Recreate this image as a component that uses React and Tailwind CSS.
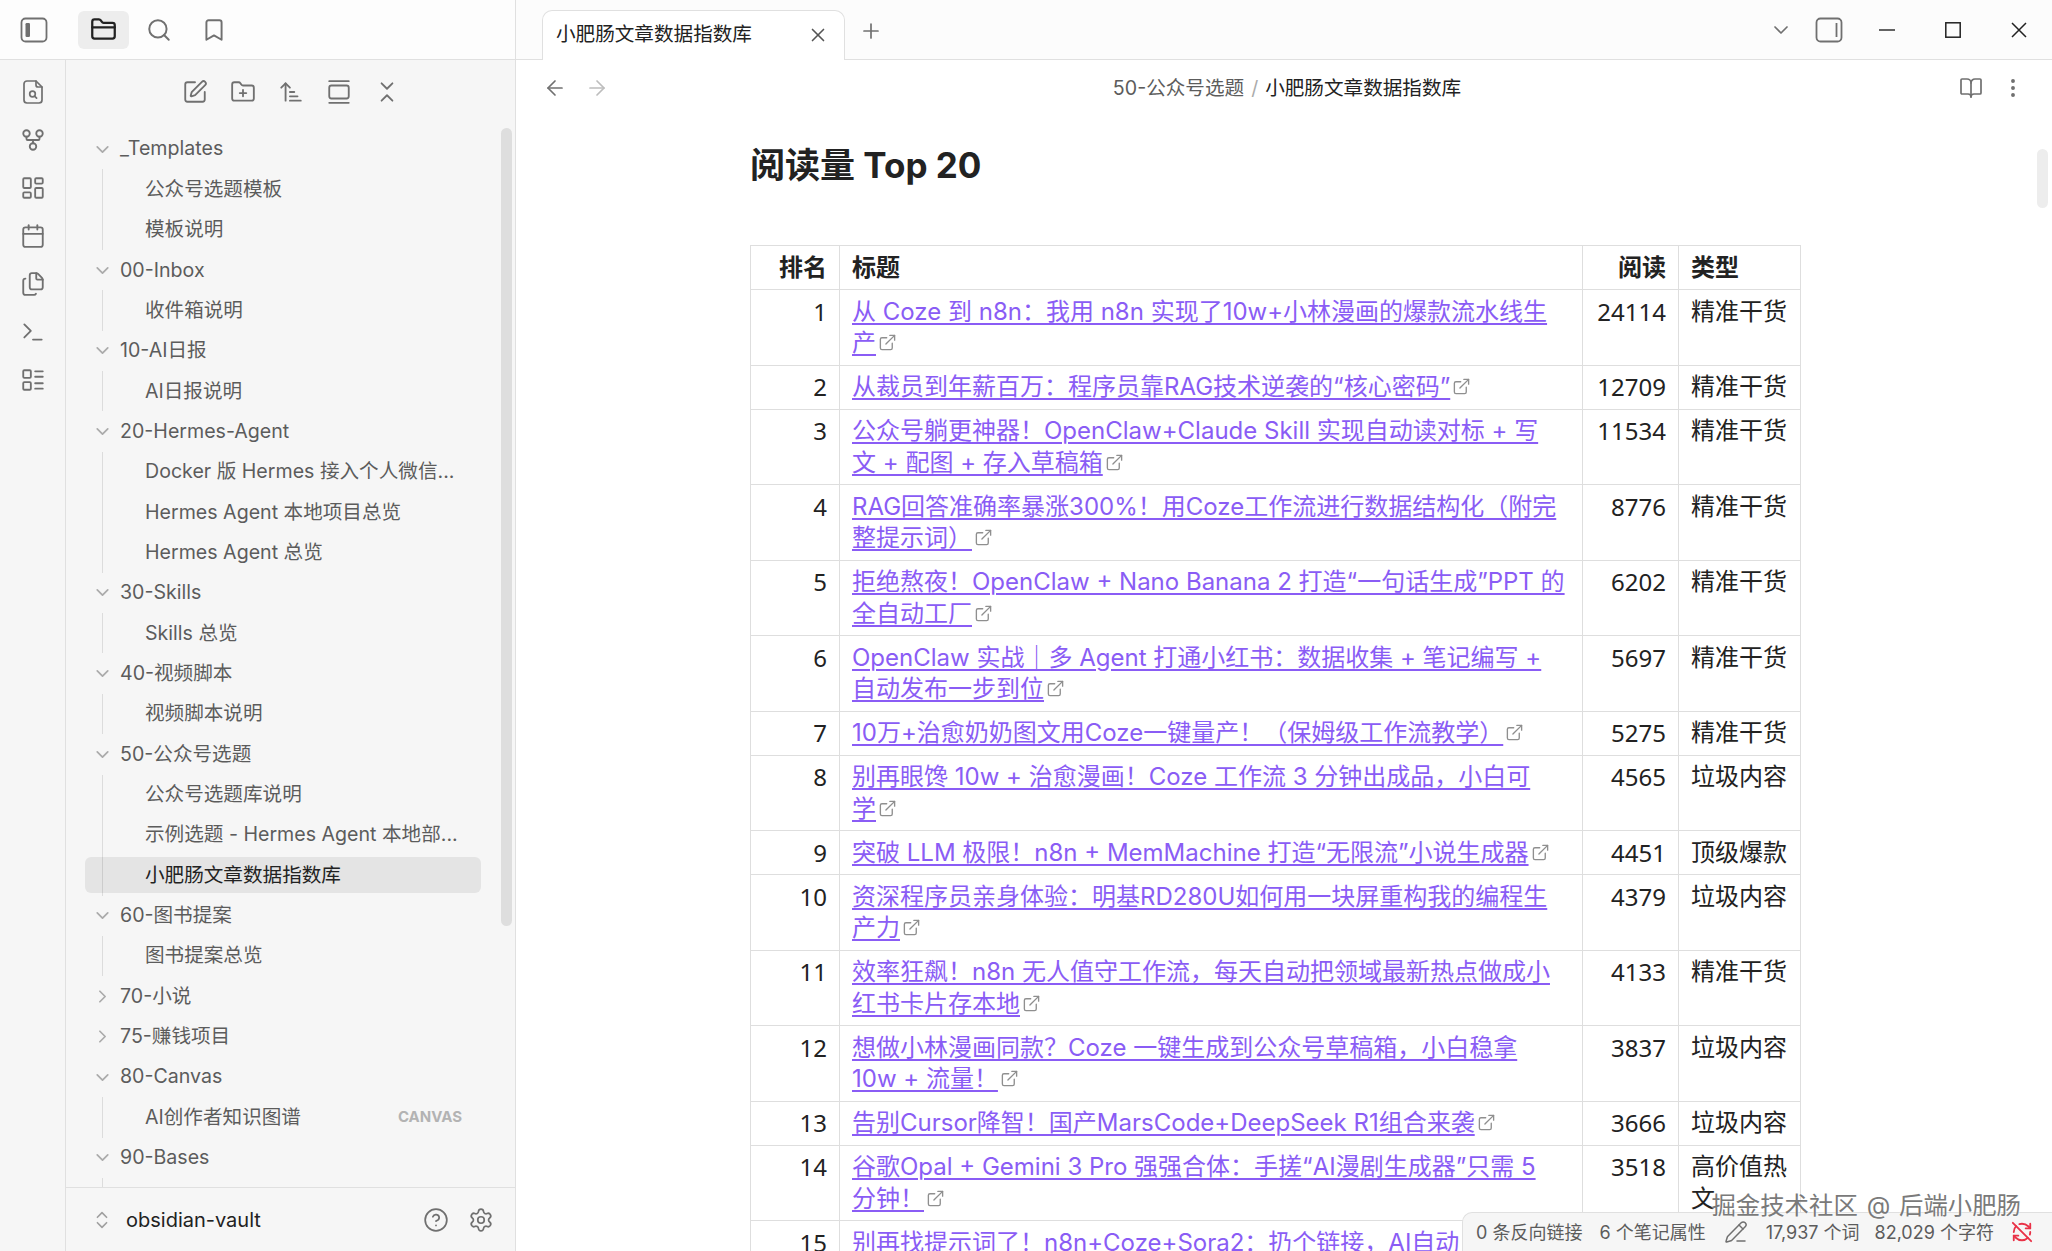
import {
  ArrowLeft, ArrowRight, ArrowUpNarrowWide, BookOpen, Bookmark, Calendar, ChevronDown, ChevronRight,
  ChevronsDownUp, ChevronsUpDown, CircleHelp, ExternalLink, Files, FolderClosed, FolderPlus,
  GalleryVertical, GitFork, LayoutDashboard, LayoutList, MoreVertical, PencilLine, Plus, RefreshCwOff,
  Search, Settings, SquarePen, Terminal, X,
} from 'lucide-react';

const tree = [
  { name: '_Templates', open: true, files: [{ name: '公众号选题模板' }, { name: '模板说明' }] },
  { name: '00-Inbox', open: true, files: [{ name: '收件箱说明' }] },
  { name: '10-AI日报', open: true, files: [{ name: 'AI日报说明' }] },
  {
    name: '20-Hermes-Agent',
    open: true,
    files: [{ name: 'Docker 版 Hermes 接入个人微信...' }, { name: 'Hermes Agent 本地项目总览' }, { name: 'Hermes Agent 总览' }],
  },
  { name: '30-Skills', open: true, files: [{ name: 'Skills 总览' }] },
  { name: '40-视频脚本', open: true, files: [{ name: '视频脚本说明' }] },
  {
    name: '50-公众号选题',
    open: true,
    files: [{ name: '公众号选题库说明' }, { name: '示例选题 - Hermes Agent 本地部...' }, { name: '小肥肠文章数据指数库', active: true }],
  },
  { name: '60-图书提案', open: true, files: [{ name: '图书提案总览' }] },
  { name: '70-小说', open: false, files: [] },
  { name: '75-赚钱项目', open: false, files: [] },
  { name: '80-Canvas', open: true, files: [{ name: 'AI创作者知识图谱', badge: 'CANVAS' }] },
  { name: '90-Bases', open: true, files: [{ name: '' }] },
];

const rows = [
  [1, ['从 Coze 到 n8n：我用 n8n 实现了10w+小林漫画的爆款流水线生', '产'], '24114', '精准干货'],
  [2, ['从裁员到年薪百万：程序员靠RAG技术逆袭的“核心密码”'], '12709', '精准干货'],
  [3, ['公众号躺更神器！OpenClaw+Claude Skill 实现自动读对标 + 写', '文 + 配图 + 存入草稿箱'], '11534', '精准干货'],
  [4, ['RAG回答准确率暴涨300%！用Coze工作流进行数据结构化（附完', '整提示词）'], '8776', '精准干货'],
  [5, ['拒绝熬夜！OpenClaw + Nano Banana 2 打造“一句话生成”PPT 的', '全自动工厂'], '6202', '精准干货'],
  [6, ['OpenClaw 实战｜多 Agent 打通小红书：数据收集 + 笔记编写 +', '自动发布一步到位'], '5697', '精准干货'],
  [7, ['10万+治愈奶奶图文用Coze一键量产！（保姆级工作流教学）'], '5275', '精准干货'],
  [8, ['别再眼馋 10w + 治愈漫画！Coze 工作流 3 分钟出成品，小白可', '学'], '4565', '垃圾内容'],
  [9, ['突破 LLM 极限！n8n + MemMachine 打造“无限流”小说生成器'], '4451', '顶级爆款'],
  [10, ['资深程序员亲身体验：明基RD280U如何用一块屏重构我的编程生', '产力'], '4379', '垃圾内容'],
  [11, ['效率狂飙！n8n 无人值守工作流，每天自动把领域最新热点做成小', '红书卡片存本地'], '4133', '精准干货'],
  [12, ['想做小林漫画同款？Coze 一键生成到公众号草稿箱，小白稳拿', '10w + 流量！'], '3837', '垃圾内容'],
  [13, ['告别Cursor降智！国产MarsCode+DeepSeek R1组合来袭'], '3666', '垃圾内容'],
  [14, ['谷歌Opal + Gemini 3 Pro 强强合体：手搓“AI漫剧生成器”只需 5', '分钟！'], '3518', '高价值热文'],
  [15, ['别再找提示词了！n8n+Coze+Sora2：扔个链接，AI自动'], '', ''],
];

function SidebarLeftIcon() {
  return (
    <svg width="28" height="26" viewBox="0 0 28 26" fill="none">
      <rect x="1.5" y="1.5" width="25" height="23" rx="4" stroke="#707070" strokeWidth="1.8" />
      <rect x="5.5" y="6" width="4.5" height="14" rx="1.2" fill="#707070" />
    </svg>
  );
}

function SidebarRightIcon() {
  return (
    <svg width="28" height="26" viewBox="0 0 28 26" fill="none">
      <rect x="1.5" y="1.5" width="25" height="23" rx="4" stroke="#707070" strokeWidth="1.8" />
      <path d="M21.5 6v14" stroke="#707070" strokeWidth="1.8" />
    </svg>
  );
}

// document with a small magnifier in the middle, lucide has none that matches
function FileLensIcon() {
  return (
    <svg width="26" height="26" viewBox="0 0 26 26" fill="none" stroke="currentColor" strokeWidth="1.7" strokeLinecap="round" strokeLinejoin="round">
      <path d="M16 2H7a3 3 0 0 0-3 3v16a3 3 0 0 0 3 3h12a3 3 0 0 0 3-3V8z" />
      <path d="M16 2v4a2 2 0 0 0 2 2h4" />
      <circle cx="12.5" cy="15" r="2.8" />
      <path d="M14.6 17.1l2 2" />
    </svg>
  );
}

function FolderRow({ folder }) {
  const Chevron = folder.open ? ChevronDown : ChevronRight;
  return (
    <div className="flex h-[36px] my-[2.18px] items-center text-[19.6px] text-[#5c5c5c]">
      <div className="flex w-[54px] justify-center pl-[18px] pr-0">
        <Chevron size={21} strokeWidth={2} className="text-[#ababab]" />
      </div>
      <span className="whitespace-nowrap">{folder.name}</span>
    </div>
  );
}

function FileRow({ file }) {
  return (
    <div
      className={`flex h-[36px] my-[2.18px] ml-[-18px] w-[396px] items-center rounded-[6px] pl-[60px] pr-[18px] text-[19.6px] ${
        file.active ? 'bg-black/[0.07] text-[#222222]' : 'text-[#5c5c5c]'
      }`}
    >
      <span className="flex-1 truncate">{file.name}</span>
      {file.badge && <span className="mr-[1px] text-[15px] font-bold text-[#b3b3b3]">{file.badge}</span>}
    </div>
  );
}

function FileTree() {
  return (
    <div className="relative flex flex-1 flex-col overflow-hidden pt-[1px]">
      {tree.map((folder) => (
        <div key={folder.name} className="flex shrink-0 flex-col">
          <FolderRow folder={folder} />
          {folder.files.length > 0 && (
            <div className="ml-[36px] flex flex-col border-l border-[#dcdcdc]">
              {folder.files.map((file) => (
                <FileRow key={file.name} file={file} />
              ))}
            </div>
          )}
        </div>
      ))}
      <div className="absolute right-[3px] top-0 h-[798px] w-[11px] rounded-[6px] bg-[#dedede]" />
    </div>
  );
}

function LeftPanel() {
  return (
    <div className="flex h-full w-[516px] shrink-0 flex-col border-r border-[#e0e0e0]">
      <div className="flex h-[60px] shrink-0 items-center border-b border-[#e0e0e0] bg-[#fdfdfd] pl-[20px]">
        <SidebarLeftIcon />
        <div className="ml-[30px] flex h-[38px] w-[51px] items-center justify-center rounded-[6px] bg-[#ededed]">
          <FolderClosed size={27} strokeWidth={2} className="text-[#222222]" />
        </div>
        <Search size={26} strokeWidth={1.8} className="ml-[17px] text-[#707070]" />
        <Bookmark size={26} strokeWidth={1.8} className="ml-[29px] text-[#707070]" />
      </div>
      <div className="flex min-h-0 flex-1 bg-[#f6f6f6]">
        <div className="flex w-[66px] shrink-0 flex-col items-center gap-[22px] border-r border-[#e0e0e0] pt-[19px] text-[#707070]">
          <FileLensIcon />
          <GitFork size={26} strokeWidth={1.7} />
          <LayoutDashboard size={26} strokeWidth={1.7} />
          <Calendar size={26} strokeWidth={1.7} />
          <Files size={26} strokeWidth={1.7} />
          <Terminal size={26} strokeWidth={1.7} />
          <LayoutList size={26} strokeWidth={1.7} />
        </div>
        <div className="flex min-w-0 flex-1 flex-col">
          <div className="flex h-[68px] shrink-0 items-center justify-center gap-[22px] pb-[4px] text-[#707070]">
            <SquarePen size={26} strokeWidth={1.7} />
            <FolderPlus size={26} strokeWidth={1.7} />
            <ArrowUpNarrowWide size={26} strokeWidth={1.7} />
            <GalleryVertical size={26} strokeWidth={1.7} />
            <ChevronsDownUp size={26} strokeWidth={1.7} />
          </div>
          <FileTree />
          <div className="flex h-[64px] shrink-0 items-center border-t border-[#e0e0e0] pl-[25px] pr-[21px]">
            <ChevronsUpDown size={22} strokeWidth={1.8} className="text-[#a0a0a0]" />
            <span className="ml-[13px] flex-1 text-[20px] text-[#222222]">obsidian-vault</span>
            <CircleHelp size={26} strokeWidth={1.6} className="text-[#707070]" />
            <Settings size={26} strokeWidth={1.6} className="ml-[19px] text-[#707070]" />
          </div>
        </div>
      </div>
    </div>
  );
}

function TabBar() {
  return (
    <div className="flex h-[60px] shrink-0 items-end border-b border-[#e0e0e0] bg-[#fcfcfc] pl-[26px]">
      <div className="mb-[-1px] flex h-[50px] w-[303px] items-center rounded-t-[10px] border border-b-0 border-[#e0e0e0] bg-white pb-[2px] pl-[13px] pr-[15px]">
        <span className="flex-1 text-[19.6px] text-[#222222]">小肥肠文章数据指数库</span>
        <X size={22} strokeWidth={1.8} className="text-[#555555]" />
      </div>
      <Plus size={24} strokeWidth={1.7} className="mb-[16px] ml-[14px] text-[#707070]" />
      <div className="ml-auto mb-[16px] flex items-center pr-[25px]">
        <ChevronDown size={24} strokeWidth={1.7} className="text-[#707070]" />
        <div className="ml-[22px]">
          <SidebarRightIcon />
        </div>
        <svg width="16" height="2" viewBox="0 0 16 2" className="ml-[36px]">
          <path d="M0 1h16" stroke="#222222" strokeWidth="1.4" />
        </svg>
        <svg width="16" height="16" viewBox="0 0 16 16" className="ml-[50px]" fill="none">
          <rect x="0.8" y="0.8" width="14.4" height="14.4" stroke="#222222" strokeWidth="1.5" />
        </svg>
        <svg width="16" height="16" viewBox="0 0 16 16" className="ml-[50px]" fill="none">
          <path d="M1 1l14 14M15 1L1 15" stroke="#222222" strokeWidth="1.5" />
        </svg>
      </div>
    </div>
  );
}

function ViewHeader() {
  return (
    <div className="flex h-[56px] shrink-0 items-center pl-[27px] pr-[27px]">
      <ArrowLeft size={24} strokeWidth={1.7} className="text-[#707070]" />
      <ArrowRight size={24} strokeWidth={1.7} className="ml-[18px] text-[#bdbdbd]" />
      <div className="flex flex-1 justify-center pl-[6px] pt-[1px] text-[19.6px]">
        <span className="text-[#5c5c5c]">50-公众号选题</span>
        <span className="mx-[7px] text-[#ababab]">/</span>
        <span className="text-[#222222]">小肥肠文章数据指数库</span>
      </div>
      <BookOpen size={24} strokeWidth={1.7} className="text-[#707070]" />
      <MoreVertical size={24} strokeWidth={1.9} className="ml-[18px] text-[#707070]" />
    </div>
  );
}

function ArticleTable() {
  return (
    <table className="mt-[57px] w-[1050px] table-fixed border-collapse text-[24px] leading-[31.5px] text-[#222222] [text-spacing-trim:trim-start]">
      <colgroup>
        <col className="w-[89px]" />
        <col className="w-[743px]" />
        <col className="w-[96px]" />
        <col className="w-[122px]" />
      </colgroup>
      <thead>
        <tr className="font-semibold">
          <th className="border border-[#dedede] px-[12px] py-[5.75px] text-right font-semibold">排名</th>
          <th className="border border-[#dedede] px-[12px] py-[5.75px] text-left font-semibold">标题</th>
          <th className="border border-[#dedede] px-[12px] py-[5.75px] text-right font-semibold">阅读</th>
          <th className="border border-[#dedede] px-[12px] py-[5.75px] text-left font-semibold">类型</th>
        </tr>
      </thead>
      <tbody>
        {rows.map(([rank, lines, reads, kind]) => (
          <tr key={rank}>
            <td className="border border-[#dedede] px-[12px] py-[5.75px] text-right align-top font-['Noto_Sans',sans-serif]">{rank}</td>
            <td className="whitespace-nowrap border border-[#dedede] px-[12px] py-[5.75px] align-top">
              {lines.map((line, i) => (
                <div key={line}>
                  <a className="text-[#8a5cf5] underline decoration-[1.5px] underline-offset-[3px]">{line}</a>
                  {i === lines.length - 1 && rank !== 15 && (
                    <ExternalLink size={19} strokeWidth={1.7} className="ml-[2px] inline-block align-[-1px] text-[#8f8f8f]" />
                  )}
                </div>
              ))}
            </td>
            <td className="border border-[#dedede] px-[12px] py-[5.75px] text-right align-top font-['Noto_Sans',sans-serif]">{reads}</td>
            <td className="border border-[#dedede] px-[12px] py-[5.75px] align-top">{kind}</td>
          </tr>
        ))}
      </tbody>
    </table>
  );
}

function StatusBar() {
  return (
    <div className="absolute bottom-0 right-0 flex h-[39px] w-[590px] items-center rounded-tl-[10px] border-l border-t border-[#e0e0e0] bg-[#f6f6f6] pl-[13px] text-[18px] text-[#5c5c5c]">
      <span>0 条反向链接</span>
      <span className="ml-[17px]">6 个笔记属性</span>
      <PencilLine size={24} strokeWidth={1.5} className="ml-[18px] text-[#707070]" />
      <span className="ml-[18px]">17,937 个词</span>
      <span className="ml-[15px]">82,029 个字符</span>
      <RefreshCwOff size={22} strokeWidth={2} className="ml-[17px] text-[#e93147]" />
    </div>
  );
}

export default function App() {
  return (
    <div className="relative flex h-[1251px] w-[2052px] overflow-hidden bg-white font-['Inter','Noto_Sans_CJK_SC',sans-serif]">
      <LeftPanel />
      <div className="flex min-w-0 flex-1 flex-col">
        <TabBar />
        <ViewHeader />
        <div className="min-h-0 flex-1 overflow-hidden pl-[234px]">
          <h1 className="mt-[26px] text-[35px] font-bold leading-[46px] text-[#222222]">阅读量 Top 20</h1>
          <ArticleTable />
        </div>
      </div>
      <div className="absolute right-[4px] top-[149px] h-[59px] w-[11px] rounded-[6px] bg-[#ededed]" />
      <StatusBar />
      <div className="absolute right-[31px] top-[1188px] whitespace-nowrap text-[24.4px] leading-[34px] text-[#7a7a7a] [word-spacing:2px] [text-shadow:0_0_2px_#ffffff]">
        掘金技术社区 @ 后端小肥肠
      </div>
    </div>
  );
}
